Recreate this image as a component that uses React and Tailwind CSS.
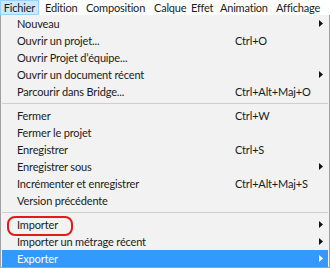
import React from "react";

const Arrow = ({ white }) => (
  <svg width="4" height="7" viewBox="0 0 4 7" className="absolute right-[5px] top-[5px]">
    <path d="M0 0 L4 3.5 L0 7 Z" fill={white ? "#ffffff" : "#111111"} />
  </svg>
);

const Item = ({ label, shortcut, arrow, active }) => (
  <div
    className={
      "relative flex h-[17px] items-center " +
      (active ? "bg-[#3399ff] text-white" : "text-[#1b1b1b]")
    }
  >
    <span className="w-[233px] pl-[15px] whitespace-nowrap">{label}</span>
    {shortcut && <span className="whitespace-nowrap">{shortcut}</span>}
    {arrow && <Arrow white={active} />}
  </div>
);

const Sep = () => (
  <div className="flex h-[7px] items-center">
    <div className="h-px w-full bg-[#cfcfcf]" />
  </div>
);

export default function App() {
  return (
    <div
      className="relative h-[268px] w-[331px] overflow-hidden bg-white text-[11px] leading-none tracking-[-0.15px]"
      style={{ fontFamily: 'Lato, "Noto Sans", sans-serif' }}
    >
      <div className="flex h-[15px] items-center bg-white text-[#1b1b1b] text-[11px] tracking-[-0.2px] whitespace-nowrap">
        <div className="flex h-[15px] w-[39px] shrink-0 items-center justify-center border border-[#99d1ff] bg-[#cce8ff]">
          Fichier
        </div>
        <span className="ml-[6px] w-[41px] shrink-0">Edition</span>
        <span className="w-[68px] shrink-0">Composition</span>
        <span className="w-[37px] shrink-0">Calque</span>
        <span className="w-[29px] shrink-0">Effet</span>
        <span className="w-[56px] shrink-0">Animation</span>
        <span className="shrink-0">Affichage</span>
      </div>
      <div className="w-[330px] border-x border-b border-[#a0a0a0] bg-[#f2f2f2] px-[1px]">
        <Item label="Nouveau" arrow />
        <Item label="Ouvrir un projet..." shortcut="Ctrl+O" />
        <Item label="Ouvrir Projet d’équipe..." />
        <Item label="Ouvrir un document récent" arrow />
        <Item label="Parcourir dans Bridge..." shortcut="Ctrl+Alt+Maj+O" />
        <Sep />
        <Item label="Fermer" shortcut="Ctrl+W" />
        <Item label="Fermer le projet" />
        <Item label="Enregistrer" shortcut="Ctrl+S" />
        <Item label="Enregistrer sous" arrow />
        <Item label="Incrémenter et enregistrer" shortcut="Ctrl+Alt+Maj+S" />
        <Item label="Version précédente" />
        <Sep />
        <Item label="Importer" arrow />
        <Item label="Importer un métrage récent" arrow />
        <Item label="Exporter" arrow active />
      </div>
      <div className="absolute left-[7px] top-[216px] h-[20px] w-[66px] rounded-[8px] border-2 border-[#e3191c]" />
    </div>
  );
}
